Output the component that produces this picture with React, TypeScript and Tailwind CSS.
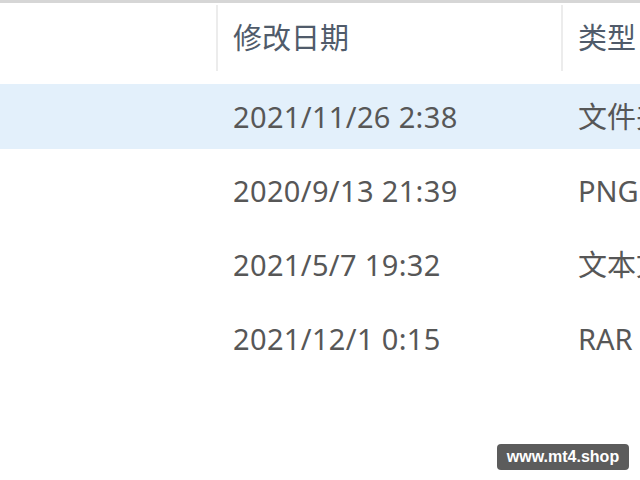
const rows = [
  { date: '2021/11/26 2:38', type: '文件夹', selected: true },
  { date: '2020/9/13 21:39', type: 'PNG 文件', selected: false },
  { date: '2021/5/7 19:32', type: '文本文档', selected: false },
  { date: '2021/12/1 0:15', type: 'RAR 压缩文件', selected: false },
];

const font = { fontFamily: '"Noto Sans", "Noto Sans CJK SC", sans-serif' };

export default function App() {
  return (
    <div className="relative w-[640px] h-[480px] overflow-hidden bg-white" style={font}>
      {/* top edge */}
      <div className="h-[3px] bg-[#d6d6d6]" />

      {/* column header */}
      <div className="flex h-[77px] text-[29px] text-[#505b6a]">
        <div className="w-[218px] shrink-0 mt-[2px] h-[66px] border-r-[2px] border-[#ececec]" />
        <div className="w-[345px] shrink-0 mt-[2px] h-[66px] border-r-[2px] border-[#ececec] pl-[15px] flex items-center">
          修改日期
        </div>
        <div className="flex-1 pl-[15px] mt-[2px] h-[66px] flex items-center whitespace-nowrap overflow-hidden">
          类型
        </div>
      </div>

      {/* file rows */}
      <div className="flex flex-col">
        {rows.map((row) => (
          <div key={row.date} className="h-[74px] pt-[4px]">
            <div
              className={`flex h-[65px] items-center text-[29px] text-[#575757] ${
                row.selected ? 'bg-[#e3f0fb]' : ''
              }`}
            >
              <div className="w-[218px] shrink-0" />
              <div className="w-[345px] shrink-0 pl-[15px] whitespace-nowrap tracking-[0.35px]">{row.date}</div>
              <div className="flex-1 pl-[15px] whitespace-nowrap overflow-hidden">{row.type}</div>
            </div>
          </div>
        ))}
      </div>

      {/* watermark */}
      <div
        className="absolute left-[497px] top-[444px] w-[132px] h-[26px] rounded-[4px] bg-[#5c5c5c] text-white text-[16px] font-bold flex items-center justify-center"
        style={{ fontFamily: '"Liberation Sans", Arial, sans-serif' }}
      >
        www.mt4.shop
      </div>
    </div>
  );
}
